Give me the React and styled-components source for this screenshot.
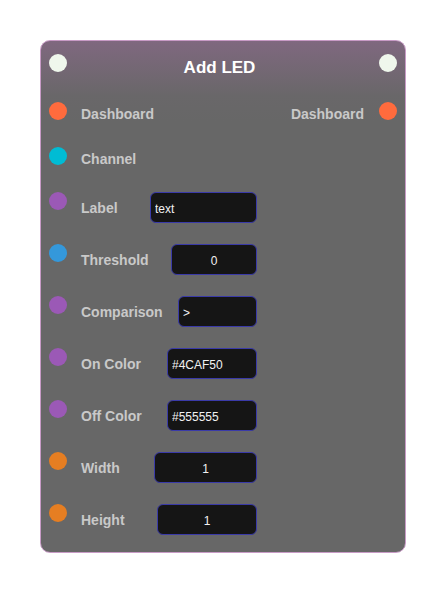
import React from "react";
import styled, { createGlobalStyle } from "styled-components";

const GlobalStyle = createGlobalStyle`
    body {
        margin: 0;
        background: #fff;
        font-family: "Liberation Sans", Arial, sans-serif;
    }
`;

const Page = styled.div`
    padding: 40px;
`;

// 노드 카드
const Node = styled.div`
    width: 366px;
    box-sizing: border-box;
    border: 1px solid #c89bc6;
    border-radius: 10px;
    background: linear-gradient(to bottom, #7f687f 0px, #696769 55px, #676767 80px, #676767 100%);
    padding: 13px 8px 17px 8px;
`;

const Header = styled.div`
    display: flex;
    align-items: flex-start;
`;

const Title = styled.div`
    flex: 1;
    text-align: center;
    line-height: 26px;
    padding-top: 1px;
    font-size: 17px;
    font-weight: bold;
    color: #fff;
    padding-right: 7px;
`;

const Dot = styled.div`
    width: 18px;
    height: 18px;
    border-radius: 50%;
    flex-shrink: 0;
    background: ${(p) => p.$color};
`;

const Body = styled.div`
    display: flex;
    justify-content: space-between;
    margin-top: 21px;
`;

const InputColumn = styled.div`
    width: 208px;
    display: flex;
    flex-direction: column;
    gap: 21px;
`;

const Row = styled.div`
    display: flex;
    align-items: flex-start;
`;

const Label = styled.div`
    margin-left: 14px;
    padding-top: ${(p) => (p.$tall ? "2px" : "1px")};
    line-height: ${(p) => (p.$tall ? "29px" : "23px")};
    font-size: 14px;
    font-weight: bold;
    color: #c9c9c9;
    white-space: nowrap;
`;

const OutputLabel = styled(Label)`
    margin-left: 0;
    margin-right: 15px;
`;

const Field = styled.input`
    margin-left: auto;
    width: ${(p) => p.$width}px;
    height: 31px;
    box-sizing: border-box;
    background: #151515;
    border: 1px solid #3a3aa8;
    border-radius: 6px;
    color: #f2f2f2;
    font-family: "Liberation Sans", Arial, sans-serif;
    font-size: 12px;
    padding: 2px 4px 0 4px;
    text-align: ${(p) => (p.$center ? "center" : "left")};
    outline: none;
`;

const inputs = [
    { name: "Dashboard", color: "#ff6b3d" },
    { name: "Channel", color: "#00bcd4" },
    { name: "Label", color: "#9b59b6", value: "text", width: 107 },
    { name: "Threshold", color: "#3498db", value: "0", width: 86, center: true },
    { name: "Comparison", color: "#9b59b6", value: ">", width: 79 },
    { name: "On Color", color: "#9b59b6", value: "#4CAF50", width: 90 },
    { name: "Off Color", color: "#9b59b6", value: "#555555", width: 90 },
    { name: "Width", color: "#e67e22", value: "1", width: 103, center: true },
    { name: "Height", color: "#e67e22", value: "1", width: 100, center: true },
];

export default function App() {
    return (
        <Page>
            <GlobalStyle />
            <Node>
                <Header>
                    <Dot $color="#eff7ec" />
                    <Title>Add LED</Title>
                    <Dot $color="#eff7ec" />
                </Header>
                <Body>
                    <InputColumn>
                        {inputs.map((item) => (
                            <Row key={item.name}>
                                <Dot $color={item.color} />
                                <Label $tall={item.width !== undefined}>{item.name}</Label>
                                {item.width !== undefined && (
                                    <Field
                                        readOnly
                                        value={item.value}
                                        $width={item.width}
                                        $center={item.center}
                                    />
                                )}
                            </Row>
                        ))}
                    </InputColumn>
                    <Row>
                        <OutputLabel>Dashboard</OutputLabel>
                        <Dot $color="#ff6b3d" />
                    </Row>
                </Body>
            </Node>
        </Page>
    );
}
